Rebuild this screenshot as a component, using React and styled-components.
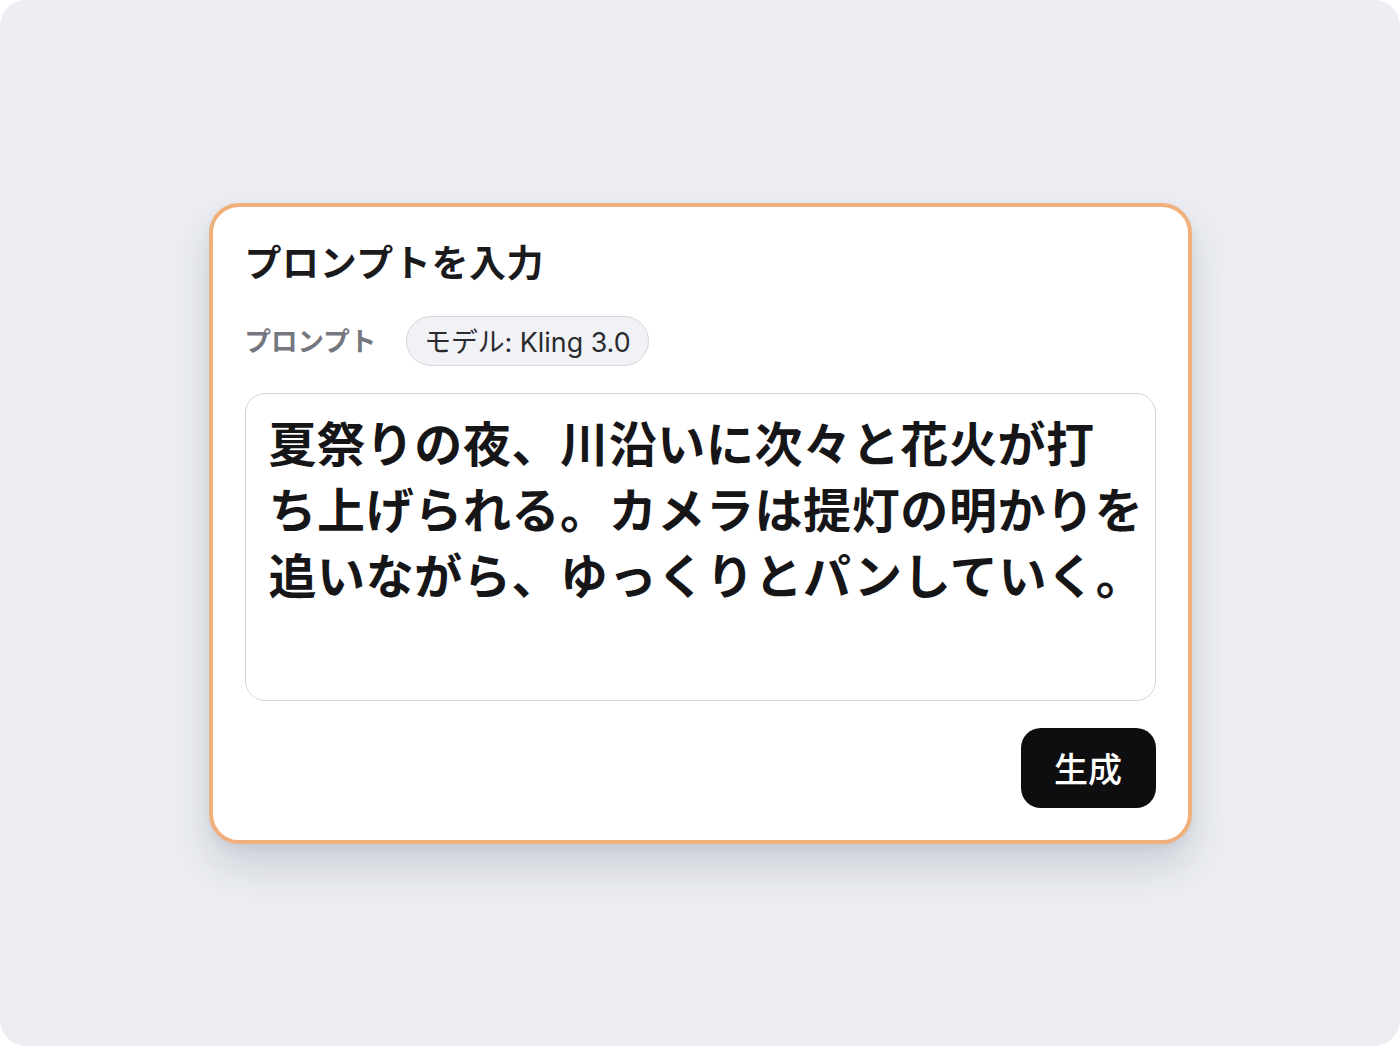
import React from "react";
import styled, { createGlobalStyle } from "styled-components";

const Global = createGlobalStyle`
  html, body { margin: 0; padding: 0; background: #ffffff; }
  body { font-family: "Inter", "Noto Sans CJK JP", sans-serif; }
  * { box-sizing: border-box; }
`;

const Page = styled.div`
  width: 1400px;
  height: 1046px;
  border-radius: 26px;
  background: #eceef3;
  display: flex;
  align-items: center;
  justify-content: center;
`;

const Card = styled.div`
  width: 983px;
  height: 641px;
  background: #ffffff;
  border: 4px solid #efb07c;
  border-radius: 30px;
  box-shadow: 0 22px 40px rgba(40, 45, 60, 0.16), 0 4px 10px rgba(40, 45, 60, 0.06);
  padding: 32px;
  display: flex;
  flex-direction: column;
`;

const Title = styled.h1`
  margin: 0;
  font-family: "Noto Sans CJK JP", sans-serif;
  font-size: 37px;
  line-height: 44px;
  font-weight: 700;
  color: #1b1b1d;
  letter-spacing: 0.6px;
`;

const LabelRow = styled.div`
  display: flex;
  align-items: center;
  gap: 30px;
  margin-top: 33px;
`;

const Label = styled.span`
  font-family: "Noto Sans CJK JP", sans-serif;
  font-size: 26.5px;
  font-weight: 700;
  color: #74777e;
  line-height: 1;
`;

const Pill = styled.span`
  display: inline-flex;
  align-items: center;
  height: 50px;
  padding: 0 17px;
  border-radius: 25px;
  background: #f1f2f6;
  border: 1px solid #d3d6dc;
  font-family: "Inter", "Noto Sans CJK JP", sans-serif;
  font-size: 26.8px;
  font-weight: 400;
  color: #2a2b2e;
`;

const PromptBox = styled.div`
  margin-top: 27px;
  height: 308px;
  border: 1px solid #d2d5da;
  border-radius: 20px;
  background: #ffffff;
  padding: 14px 0 0 23px;
  font-family: "Noto Sans CJK JP", sans-serif;
  font-size: 48px;
  font-weight: 700;
  line-height: 66px;
  letter-spacing: 0.6px;
  color: #161618;
  white-space: pre;
  overflow: hidden;
`;

const Footer = styled.div`
  margin-top: auto;
  display: flex;
  justify-content: flex-end;
`;

const GenerateButton = styled.button`
  height: 80px;
  width: 135px;
  border: none;
  border-radius: 20px;
  background: #0e0e10;
  color: #ffffff;
  font-family: "Noto Sans CJK JP", sans-serif;
  font-size: 34px;
  font-weight: 500;
  cursor: pointer;
`;

const promptText =
  "夏祭りの夜、川沿いに次々と花火が打\nち上げられる。カメラは提灯の明かりを\n追いながら、ゆっくりとパンしていく。";

export default function App() {
  return (
    <>
      <Global />
      <Page>
        <Card>
          <Title>プロンプトを入力</Title>
          <LabelRow>
            <Label>プロンプト</Label>
            <Pill>モデル: Kling 3.0</Pill>
          </LabelRow>
          <PromptBox>{promptText}</PromptBox>
          <Footer>
            <GenerateButton>生成</GenerateButton>
          </Footer>
        </Card>
      </Page>
    </>
  );
}
